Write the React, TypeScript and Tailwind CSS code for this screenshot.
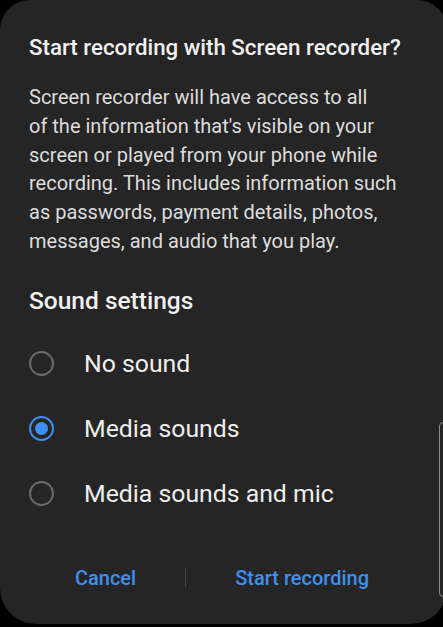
import { useState } from "react";

type Option = {
  id: string;
  label: string;
};

const options: Option[] = [
  { id: "none", label: "No sound" },
  { id: "media", label: "Media sounds" },
  { id: "mic", label: "Media sounds and mic" },
];

const Radio = ({ checked }: { checked: boolean }) => (
  <span
    className={
      checked
        ? "flex h-[25px] w-[25px] items-center justify-center rounded-full border-2 border-[#3d8ef5]"
        : "flex h-[25px] w-[25px] items-center justify-center rounded-full border-2 border-[#6a6a6a]"
    }
  >
    {checked && <span className="h-[13px] w-[13px] rounded-full bg-[#3d8ef5]" />}
  </span>
);

const App = () => {
  const [sound, setSound] = useState("media");

  return (
    <div
      className="relative h-[627px] w-[443px] overflow-hidden bg-black"
      style={{ fontFamily: "Roboto, 'Noto Sans', sans-serif" }}
    >
      <div className="flex h-[624px] w-[447px] flex-col rounded-t-[30px] rounded-b-[36px] bg-[#252525] px-[29px] pt-[33px]">
        <h2 className="whitespace-nowrap text-[22.3px] font-medium leading-[28px] text-[#f1f1f1]">
          Start recording with Screen recorder?
        </h2>
        <p className="mt-[22px] whitespace-pre-line text-[20px] leading-[28.8px] text-[#dddddd]">
          {"Screen recorder will have access to all\nof the information that's visible on your\nscreen or played from your phone while\nrecording. This includes information such\nas passwords, payment details, photos,\nmessages, and audio that you play."}
        </p>

        <h3 className="mt-[29px] text-[24.5px] font-medium leading-[32px] text-[#f1f1f1]">
          Sound settings
        </h3>

        <div className="mt-[14.5px] flex flex-col">
          {options.map((o) => (
            <button
              key={o.id}
              onClick={() => setSound(o.id)}
              className="flex h-[65px] items-center gap-[30px] text-left"
            >
              <Radio checked={sound === o.id} />
              <span className="whitespace-nowrap text-[24.8px] leading-[28px] text-[#eeeeee]">
                {o.label}
              </span>
            </button>
          ))}
        </div>

        <div className="mt-[39.5px] flex items-center justify-center pr-[3px]">
          <button className="whitespace-nowrap px-[49px] text-[20px] font-medium leading-[24px] text-[#3f8fee]">
            Cancel
          </button>
          <span className="h-[19px] w-px shrink-0 bg-[#444444]" />
          <button className="whitespace-nowrap px-[49px] text-[20px] font-medium leading-[24px] text-[#3f8fee]">
            Start recording
          </button>
        </div>
      </div>

      <div className="absolute left-[439px] top-[422px] h-[175px] w-[12px] rounded-l-[4px] border border-[#8a8a8a]" />
    </div>
  );
};

export default App;
